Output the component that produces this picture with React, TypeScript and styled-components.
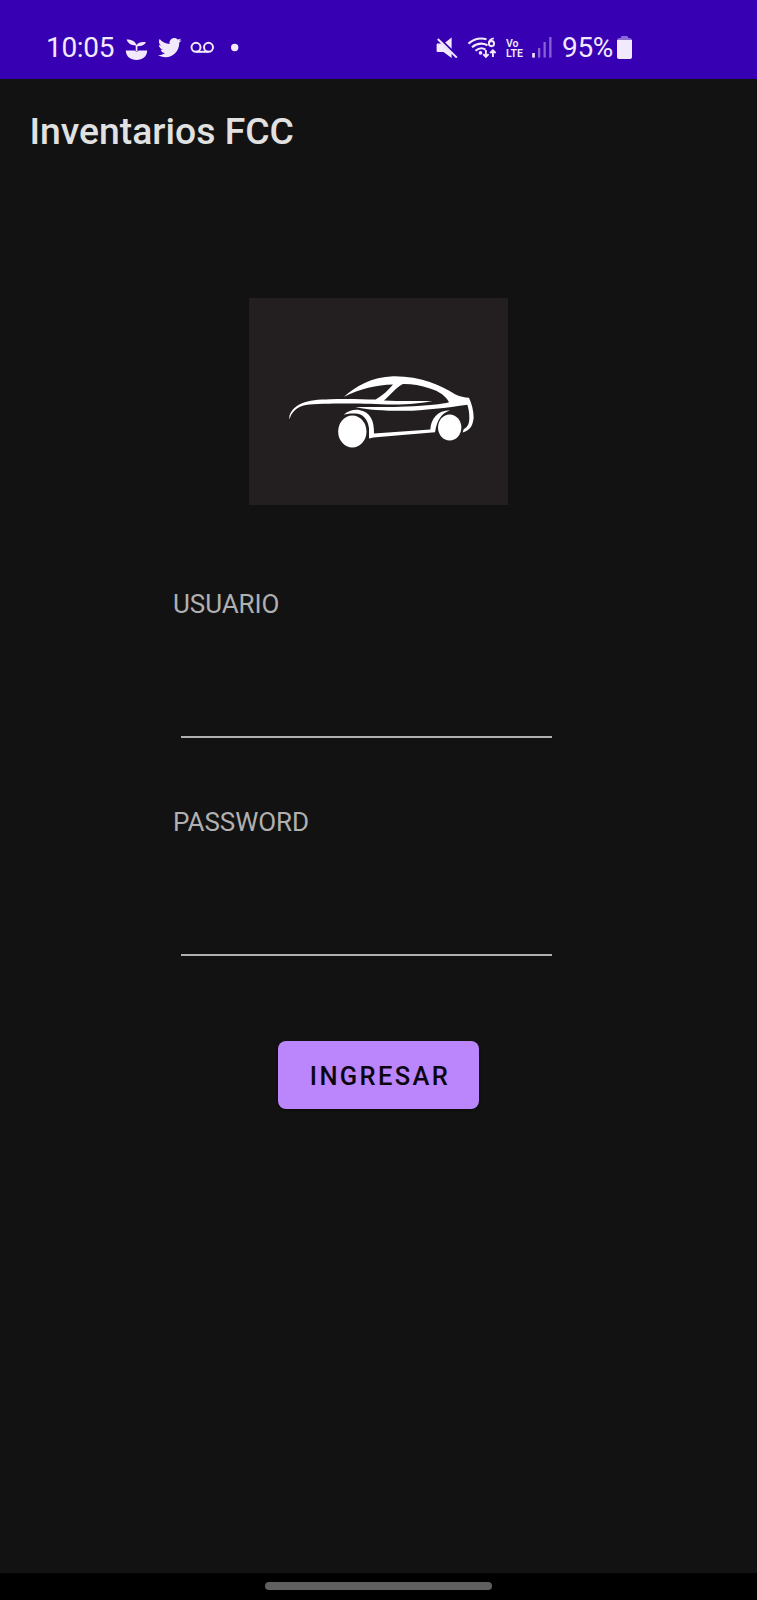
import React from 'react';
import styled, { createGlobalStyle } from 'styled-components';

const GlobalStyle = createGlobalStyle`
  * { box-sizing: border-box; }
  html, body { margin: 0; padding: 0; background: #121212; }
  body { font-family: Roboto, "Liberation Sans", sans-serif; }
`;

const Screen = styled.div`
  width: 757px;
  height: 1600px;
  display: flex;
  flex-direction: column;
  background: #121212;
  overflow: hidden;
`;

const StatusBar = styled.header`
  height: 78.5px;
  flex: none;
  display: flex;
  justify-content: space-between;
  align-items: flex-start;
  padding: 32px 125px 0 46px;
  background: #3700b3;
  color: #f3e9fd;
`;

const StatusGroup = styled.div`
  display: flex;
  align-items: center;
  height: 32px;
`;

const StatusText = styled.span<{ $width: number; $gap?: number }>`
  width: ${({ $width }) => $width}px;
  margin-left: ${({ $gap = 0 }) => $gap}px;
  font-size: 28px;
  letter-spacing: -0.3px;
  line-height: 32px;
  white-space: nowrap;
`;

const StatusIcon = styled.svg<{ $gap: number }>`
  flex: none;
  display: block;
  height: 32px;
  margin-left: ${({ $gap }) => $gap}px;
  fill: currentColor;
  overflow: visible;
`;

const Volte = styled.div`
  display: flex;
  flex-direction: column;
  width: 19px;
  margin: 1px 0 0 9px;
  font-size: 10.5px;
  font-weight: 600;
  line-height: 10px;
`;

const TitleBar = styled.div`
  height: 106.5px;
  flex: none;
  padding: 0 0 1px 29.5px;
  display: flex;
  align-items: center;
`;

const Title = styled.h1`
  margin: 0;
  font-size: 37.3px;
  font-weight: 500;
  line-height: 44px;
  color: #e1e1e1;
`;

const Login = styled.main`
  flex: 1;
  display: flex;
  flex-direction: column;
  align-items: center;
  padding-top: 112.5px;
`;

const Logo = styled.svg`
  display: block;
  flex: none;
  width: 259px;
  height: 207.5px;
  margin-bottom: 83px;
  background: #231f20;
`;

const Field = styled.label`
  width: 411px;
  height: 218px;
  flex: none;
  display: flex;
  flex-direction: column;
`;

const FieldLabel = styled.span`
  font-size: 26px;
  line-height: 32px;
  letter-spacing: -0.07px;
  color: #b0b0b0;
`;

const Input = styled.input`
  width: 371px;
  height: 118px;
  margin-left: 8px;
  padding: 0 4px;
  border: 0;
  border-bottom: 2px solid #b0b0b0;
  outline: 0;
  background: transparent;
  color: #e1e1e1;
  font: 34px Roboto, sans-serif;
`;

const Submit = styled.button`
  width: 201px;
  height: 68px;
  flex: none;
  margin-top: 16.5px;
  padding: 2px 0 0 3px;
  border: 0;
  border-radius: 8px;
  background: #bb86fc;
  color: #0b0612;
  font: 500 25.5px Roboto, sans-serif;
  letter-spacing: 2.35px;
  box-shadow: 0 1px 3px rgba(0, 0, 0, 0.5);
`;

const NavBar = styled.footer`
  height: 27px;
  flex: none;
  display: flex;
  justify-content: center;
  padding-top: 9px;
  background: #000;
`;

const NavHandle = styled.div`
  width: 227px;
  height: 8px;
  border-radius: 4px;
  background: #606060;
`;

const CarLogo = () => (
  <Logo viewBox="27 23.500 777 622.500" fill="#fff" aria-label="logo">
    <path d="M149 387C144 372 160 350 186 339C207 330 235 328 270 327C320 325 370 327 407 328C430 315 445 300 459 283C410 284 360 296 312 320C345 289 395 260 460 258C540 257 600 284 645 312C658 319 675 321 687 323C696 342 701 365 701 383C698 407 692 420 668 427L671 417C684 411 688 399 688 383C688 366 685 354 682 344C620 353 540 363 490 362C430 362 380 358 346 351C400 350 450 352 500 349C560 347 610 341 627 336C618 319 600 304 570 295C540 285 510 281 487 282C468 292 450 315 432 331C480 334 530 332 578 333C545 338 510 343 460 343C400 342 360 339 300 340C250 341 212 340 188 347C166 355 153 369 149 387Z" />
    <path d="M311 374C325 360 345 357 360 360C390 366 403 390 402 430L571 418C573 385 592 361 630 360C604 371 592 386 585 426L478 435L400 442L387 445V415C384 388 369 370 345 370C330 369 320 371 311 374Z" />
    <ellipse cx="337" cy="424" rx="42.500" ry="48" />
    <ellipse cx="629" cy="412" rx="35" ry="39" />
  </Logo>
);

const PlantIcon = () => (
  <StatusIcon $gap={12} width="22" viewBox="126 32 22 32">
    <path d="M125.800 50.500H134.500L136.600 52L138.800 50.500H147.200C147 56.500 142.500 60 136.500 60S126 56.500 125.800 50.500Z" />
    <path d="M126.500 39.500C131.500 39.500 135 41.200 136.600 45C138.500 42.500 141 41.800 146 42.200C144.500 45 142 46.300 137.400 46.300V51.500H135.700V45.500C131 45.300 128 43.400 126.500 39.500Z" />
  </StatusIcon>
);

const TwitterIcon = () => (
  <StatusIcon $gap={9} width="25" viewBox="157 32 25 32">
    <path
      transform="translate(157 35.200) scale(1.04)"
      d="M23.643 4.937c-.835.37-1.732.62-2.675.733.962-.576 1.700-1.490 2.048-2.578-.900.534-1.897.922-2.958 1.130-.850-.904-2.060-1.470-3.400-1.470-2.572 0-4.658 2.086-4.658 4.660 0 .364.042.718.120 1.060-3.873-.195-7.304-2.050-9.602-4.868-.400.690-.630 1.490-.630 2.342 0 1.616.823 3.043 2.072 3.878-.764-.025-1.482-.234-2.110-.583v.060c0 2.257 1.605 4.140 3.737 4.568-.392.106-.803.162-1.227.162-.300 0-.593-.028-.877-.082.593 1.850 2.313 3.198 4.352 3.234-1.595 1.250-3.604 1.995-5.786 1.995-.376 0-.747-.022-1.112-.065 2.062 1.323 4.510 2.093 7.140 2.093 8.570 0 13.255-7.098 13.255-13.254 0-.200-.005-.402-.014-.602.910-.658 1.700-1.477 2.323-2.410z"
    />
  </StatusIcon>
);

const VoicemailIcon = () => (
  <StatusIcon $gap={8} width="24" viewBox="190 32 24 32">
    <g fill="none" stroke="currentColor" strokeWidth="2">
      <circle cx="196" cy="47.300" r="4.500" />
      <circle cx="208.500" cy="47.300" r="4.500" />
      <path d="M196 51.800H208.500" />
    </g>
  </StatusIcon>
);

const DotIcon = () => (
  <StatusIcon $gap={17} width="8" viewBox="231 32 8 32">
    <circle cx="234.700" cy="47.500" r="3.700" />
  </StatusIcon>
);

const MuteIcon = () => (
  <StatusIcon $gap={0} width="22" viewBox="436 32 22 32">
    <path d="M445.200 42.600L451.600 37.400V48.800Z" />
    <path d="M436.600 44.600Q436.600 43.600 437.600 43.600H441.600L451.600 53.500V58L443.500 51.900H437.600Q436.600 51.900 436.600 50.900Z" />
    <path d="M437.800 39L456.800 57.600" fill="none" stroke="currentColor" strokeWidth="2" />
  </StatusIcon>
);

const WifiIcon = () => (
  <StatusIcon $gap={10} width="29" viewBox="468 32 29 32">
    <g fill="none" stroke="currentColor" strokeWidth="2.100">
      <path d="M468.500 43.600C474 38.800 480 37.600 486.500 39.200" />
      <path d="M472 47.200C477 43.200 482 42.600 487.500 45.200" />
      <path d="M475.500 50.700C479 47.900 482.500 47.600 485.500 49.600" />
      <path d="M485.900 50V56.500M483.200 54.200L485.900 56.900L488.600 54.200M492.900 57V50.500M490.200 53L492.900 50.300L495.600 53" strokeWidth="1.900" />
      <path d="M493.800 38.400C490.400 39 488.900 41 488.900 43.500" strokeWidth="1.900" />
      <circle cx="491.500" cy="43.600" r="2.600" strokeWidth="1.900" />
    </g>
    <circle cx="480.500" cy="52.900" r="1.800" />
  </StatusIcon>
);

const SignalIcon = () => (
  <StatusIcon $gap={7} width="20" viewBox="532 32 20 32">
    <rect x="532.200" y="53" width="2.600" height="4.600" />
    <g opacity="0.420">
      <rect x="538" y="48" width="2.300" height="9.600" />
      <rect x="543.500" y="42" width="2.300" height="15.600" />
      <rect x="549.200" y="37" width="2.300" height="20.600" />
    </g>
  </StatusIcon>
);

const BatteryIcon = () => (
  <StatusIcon $gap={4} width="15" viewBox="617 32 15 32">
    <path d="M621 38V37Q621 36 622 36H627Q628 36 628 37V38H630Q632 38 632 40.500H617Q617 38 619 38Z" opacity="0.450" />
    <path d="M617 40H632V57Q632 59 630 59H619Q617 59 617 57Z" />
  </StatusIcon>
);

export default function App() {
  return (
    <>
      <GlobalStyle />
      <Screen>
        <StatusBar>
          <StatusGroup>
            <StatusText $width={68}>10:05</StatusText>
            <PlantIcon />
            <TwitterIcon />
            <VoicemailIcon />
            <DotIcon />
          </StatusGroup>
          <StatusGroup>
            <MuteIcon />
            <WifiIcon />
            <Volte>
              <span>Vo</span>
              <span>LTE</span>
            </Volte>
            <SignalIcon />
            <StatusText $width={51} $gap={10}>95%</StatusText>
            <BatteryIcon />
          </StatusGroup>
        </StatusBar>
        <TitleBar>
          <Title>Inventarios FCC</Title>
        </TitleBar>
        <Login>
          <CarLogo />
          <Field>
            <FieldLabel>USUARIO</FieldLabel>
            <Input type="text" />
          </Field>
          <Field>
            <FieldLabel>PASSWORD</FieldLabel>
            <Input type="password" />
          </Field>
          <Submit type="button">INGRESAR</Submit>
        </Login>
        <NavBar>
          <NavHandle />
        </NavBar>
      </Screen>
    </>
  );
}
